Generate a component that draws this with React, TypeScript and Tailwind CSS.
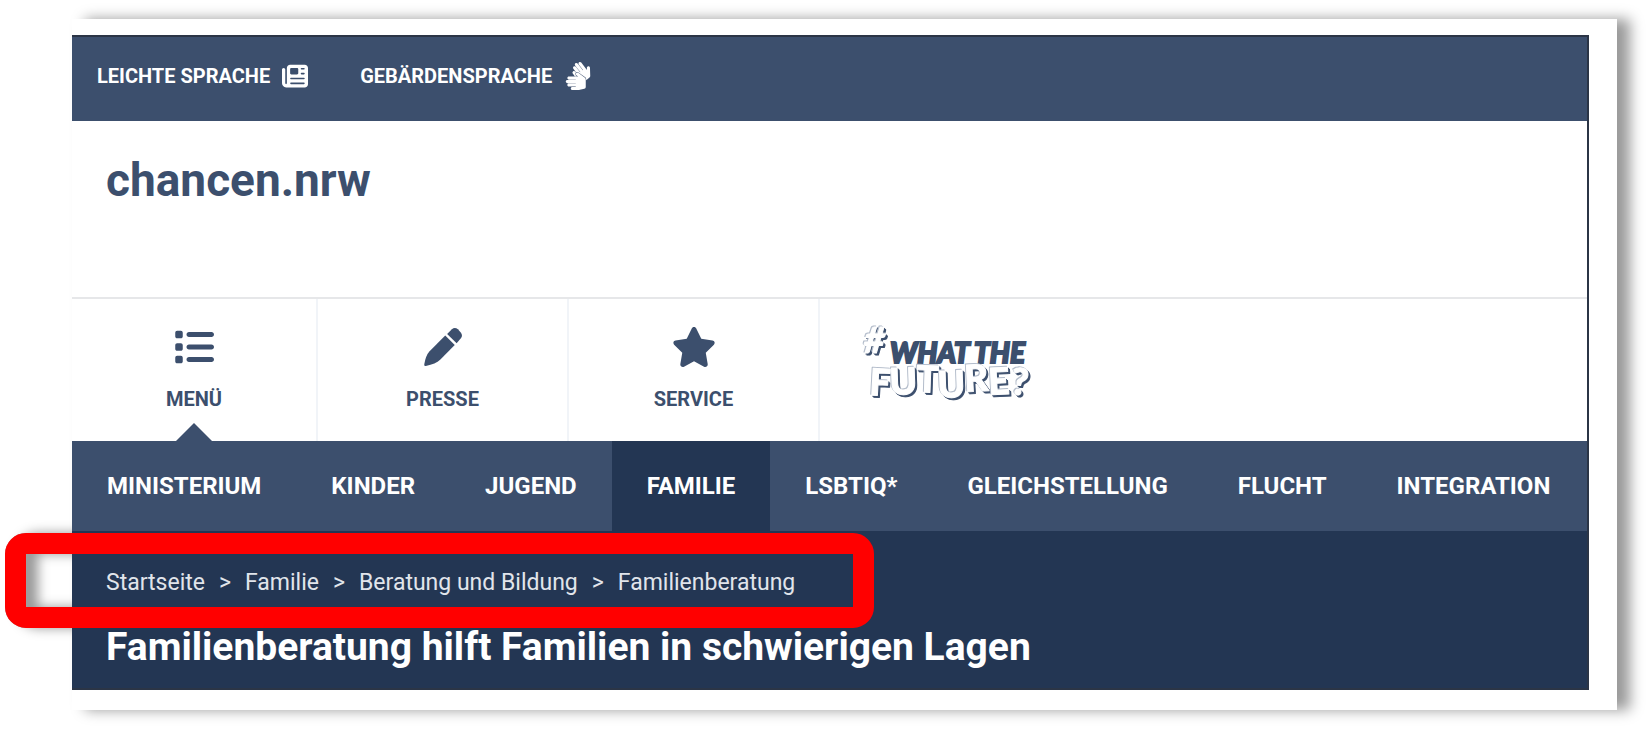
import React, { useState } from 'react';
import { FaSignLanguage } from 'react-icons/fa';
import { FaList, FaNewspaper, FaStar } from 'react-icons/fa6';

const navItems = ['Ministerium', 'Kinder', 'Jugend', 'Familie', 'LSBTIQ*', 'Gleichstellung', 'Flucht', 'Integration'];

const breadcrumb = ['Startseite', 'Familie', 'Beratung und Bildung', 'Familienberatung'];

const PencilIcon: React.FC = () => (
  <svg viewBox="0 0 126 124" className="h-10 w-10" fill="currentColor" aria-hidden="true">
    <path d="M76 21 L91 6 Q100 -1 110 6 L119 16 Q126 25 120 34 L106 50 Z" />
    <path d="M70 26 L100 56 L54 102 Q40 115 9 122 Q3 123 4 116 Q9 88 20 76 Z" />
  </svg>
);

const CampaignLogo: React.FC = () => (
  <svg viewBox="0 0 174 84" className="h-[84px] w-[174px] overflow-visible font-['Lato',sans-serif] font-black" role="img" aria-label="#What the future?">
    <text x="30" y="40" fontSize="28" fontStyle="italic" fill="#3c4f6d" stroke="#3c4f6d" strokeWidth="2">
      WHAT THE
    </text>
    <g
      fill="#fff"
      stroke="#fff"
      strokeWidth="1"
      strokeLinejoin="round"
      className="[filter:drop-shadow(-1px_-1px_0_#b4bdcb)_drop-shadow(2px_2px_0_#3c4f6d)]"
    >
      <text x="4" y="30" fontSize="36" fontStyle="italic">
        #
      </text>
      <text
        x="9 30 56 78 105 129 150"
        y="72 72 69 75 69 72 71"
        rotate="3 -2 2 -2 -3 -3 6"
        fontSize="37"
      >
        FUTURE?
      </text>
    </g>
  </svg>
);

const App: React.FC = () => {
  const [menuOpen, setMenuOpen] = useState(true);

  return (
    <div className="isolate min-h-screen bg-white pt-[19px] pr-[33px] pl-[72px] font-['Roboto',sans-serif]">
      <div className="bg-white pt-4 pr-7 pb-5 shadow-[13px_0_13px_rgba(0,0,0,0.4)]">
        <div className="border-t-2 border-r-2 border-b-2 border-[#2b3546] bg-white">
          <div className="flex h-[84px] items-start gap-[52px] bg-[#3c4f6d] pt-[23px] pl-[25px] text-xl leading-8 font-bold text-white uppercase">
            <a href="#leichte-sprache" className="flex items-center gap-3">
              Leichte Sprache
              <FaNewspaper className="size-[26px]" />
            </a>
            <a href="#gebaerdensprache" className="flex items-center gap-3">
              Gebärdensprache
              <FaSignLanguage className="size-7" />
            </a>
          </div>

          <header className="h-[178px] border-b-2 border-[#e6e7e9] bg-white pt-8 pl-[34px]">
            <a href="#start" className="text-[46px] leading-[54px] font-bold text-[#3c4f6d]">chancen.nrw</a>
          </header>

          <div className="flex h-[142px] text-xl leading-6 font-bold text-[#3c4f6d] uppercase">
            <button
              onClick={() => setMenuOpen(!menuOpen)}
              aria-expanded={menuOpen}
              className="relative flex w-[246px] flex-col items-center gap-5 border-r-2 border-[#f1f4f8] pt-7 uppercase"
            >
              <FaList className="size-10" />
              Menü
              {menuOpen && (
                <svg viewBox="0 0 36 18" className="absolute bottom-0 h-[18px] w-9" fill="currentColor" aria-hidden="true">
                  <path d="M0 18 L18 0 L36 18 Z" />
                </svg>
              )}
            </button>
            <a href="#presse" className="flex w-[251px] flex-col items-center gap-5 border-r-2 border-[#f1f4f8] pt-7">
              <PencilIcon />
              Presse
            </a>
            <a href="#service" className="flex w-[251px] flex-col items-center gap-5 border-r-2 border-[#f1f4f8] pt-7">
              <FaStar className="h-10 w-12" />
              Service
            </a>
            <a href="#what-the-future" className="pt-6 pl-10">
              <CampaignLogo />
            </a>
          </div>

          {menuOpen && (
            <nav className="flex bg-[#3c4f6d] text-2xl leading-[90px] font-bold text-white uppercase">
              {navItems.map((item) => (
                <a
                  key={item}
                  href={`#${item.toLowerCase()}`}
                  className={`px-[35px] last:pr-0 ${item === 'Familie' ? 'bg-[#233653]' : ''}`}
                >
                  {item}
                </a>
              ))}
            </nav>
          )}

          <main className="bg-[#233653] pt-[23px] pb-[17px] pl-[34px] text-white">
            <div className="relative w-fit">
              {/* the shadow lies behind the page, the frame in front of it */}
              <div className="absolute -top-[21px] -right-[79px] -left-[101px] -z-10 h-[95px] rounded-[21px] border-[21px] border-black/40 [filter:drop-shadow(12px_0_6px_rgba(0,0,0,1))]" />
              <div className="pointer-events-none absolute -top-[21px] -right-[79px] -left-[101px] z-10 h-[95px] rounded-[21px] border-[21px] border-[#ff0000]" />
              <ol className="flex pt-[5px] text-[23px] leading-[48px] text-[#e1e5eb]">
                {breadcrumb.map((item, i) => (
                  <li key={item}>
                    {i > 0 && <span className="px-[14px]">&gt;</span>}
                    <a href={`#pfad-${i}`}>{item}</a>
                  </li>
                ))}
              </ol>
            </div>
            <h1 className="mt-4 text-[39px] leading-[48px] font-bold">Familienberatung hilft Familien in schwierigen Lagen</h1>
          </main>
        </div>
      </div>
    </div>
  );
};

export default App;
